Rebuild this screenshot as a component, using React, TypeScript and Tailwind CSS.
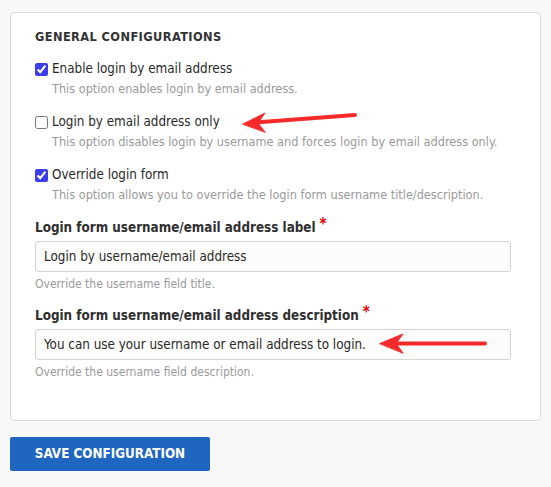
import React, { useState } from "react";

const font = { fontFamily: '"DejaVu Sans Condensed", "DejaVu Sans", Verdana, sans-serif' };

function CheckItem({ label, desc, checked }: { label: string; desc: string; checked: boolean }) {
  const [on, setOn] = useState(checked);
  return (
    <div className="mb-[13px]">
      <label className="flex h-5 items-center gap-[4px] text-[13.33px] text-[#2a2a2a]">
        <input
          type="checkbox"
          checked={on}
          onChange={() => setOn(!on)}
          className="m-0 h-[13px] w-[13px] accent-[#3d3df0]"
        />
        <span className="leading-5">{label}</span>
      </label>
      <div className="whitespace-nowrap pl-[17px] text-[12.6px] leading-5 text-[#9a9a9a]">{desc}</div>
    </div>
  );
}

function TextField({ label, value, help }: { label: string; value: string; help: string }) {
  return (
    <div className="mb-3">
      <div className="flex h-5 items-center text-[13.33px] font-bold text-[#2f2f2f]">
        {label}
        <span className="ml-[4px] -mt-[7px] text-[15px] font-bold text-[#e00000]">*</span>
      </div>
      <input
        type="text"
        defaultValue={value}
        className="mt-[3px] block h-[31px] w-[476px] rounded-[3px] border border-[#d4d4d4] bg-[#fcfcfa] px-[8px] text-[13.33px] text-[#2a2a2a] outline-none"
        style={font}
      />
      <div className="mt-[2px] text-[12px] leading-5 text-[#9a9a9a]">{help}</div>
    </div>
  );
}

export default function App() {
  return (
    <div className="relative min-h-[487px] w-[551px] overflow-hidden bg-[#f8f8f8] pt-[12px]" style={font}>
      <div className="mx-[10px] rounded-[4px] border border-[#dddddd] bg-white px-[24px] pb-[26px] pt-[16px]">
        <h3 className="text-[12.7px] font-bold uppercase leading-4 tracking-[0.4px] text-[#333]">
          General configurations
        </h3>
        <div className="mt-[14px]">
          <CheckItem
            label="Enable login by email address"
            desc="This option enables login by email address."
            checked
          />
          <CheckItem
            label="Login by email address only"
            desc="This option disables login by username and forces login by email address only."
            checked={false}
          />
          <CheckItem
            label="Override login form"
            desc="This option allows you to override the login form username title/description."
            checked
          />
        </div>
        <div className="mt-[1px]">
          <TextField
            label="Login form username/email address label"
            value="Login by username/email address"
            help="Override the username field title."
          />
          <TextField
            label="Login form username/email address description"
            value="You can use your username or email address to login."
            help="Override the username field description."
          />
        </div>
      </div>

      <button className="ml-[10px] mt-[16px] h-[34px] w-[200px] rounded-[2px] bg-[#1f66c0] text-[13.33px] font-bold uppercase text-white">
        Save configuration
      </button>

      {/* annotation arrows */}
      <svg className="pointer-events-none absolute left-0 top-0" width="551" height="487">
        <g fill="#f52a2a" stroke="#f52a2a" strokeLinecap="round" strokeLinejoin="round">
          <line x1="355" y1="115" x2="255" y2="122.5" strokeWidth="4" />
          <polygon points="243,124 265,113 258,123 265,132" strokeWidth="1" />
          <line x1="485" y1="343.5" x2="395" y2="343.5" strokeWidth="4" />
          <polygon points="380,343.5 403,334 396,343.5 403,353" strokeWidth="1" />
        </g>
      </svg>
    </div>
  );
}
